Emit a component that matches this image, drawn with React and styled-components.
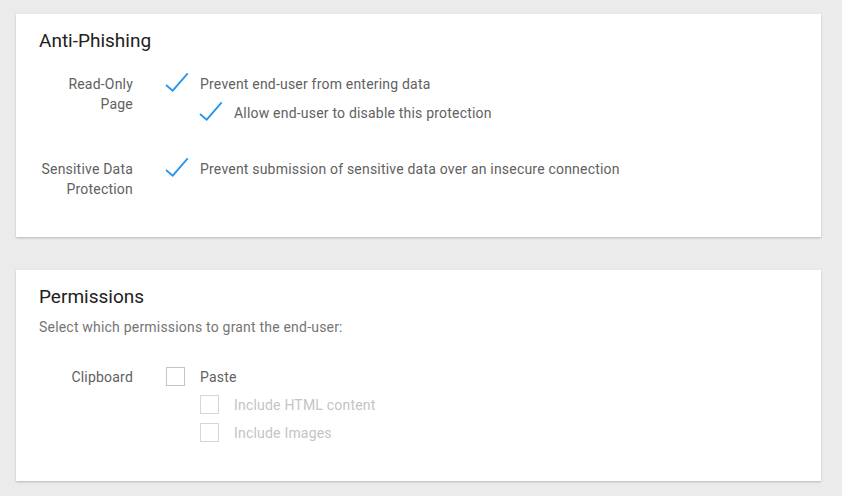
import React from 'react'
import styled, { createGlobalStyle } from 'styled-components'

const GlobalStyle = createGlobalStyle`
  html, body {
    margin: 0;
    padding: 0;
    background: #ebebeb;
    font-family: Roboto, "Liberation Sans", Arial, sans-serif;
  }
`

function Check() {
  return (
    <CheckIcon width="24" height="20" viewBox="0 0 24 20">
      <polyline points="2,11 8.7,16.7 23.7,-0.7" fill="none" stroke="#2196f3" strokeWidth="1.8" />
    </CheckIcon>
  )
}

function Option({ checked, disabled, children }) {
  return (
    <OptionRow>
      <Control>{checked ? <Check /> : <Box disabled={disabled} />}</Control>
      <OptionText disabled={disabled}>{children}</OptionText>
    </OptionRow>
  )
}

function App() {
  return (
    <Page>
      <GlobalStyle />
      <Card>
        <Title>Anti-Phishing</Title>
        <Rows>
          <Row>
            <Label>Read-Only<br />Page</Label>
            <Options>
              <Option checked>Prevent end-user from entering data</Option>
              <Sub>
                <Option checked>Allow end-user to disable this protection</Option>
              </Sub>
            </Options>
          </Row>
          <Row>
            <Label>Sensitive Data<br />Protection</Label>
            <Options>
              <Option checked>Prevent submission of sensitive data over an insecure connection</Option>
            </Options>
          </Row>
        </Rows>
      </Card>

      <Card>
        <Title>Permissions</Title>
        <Subtitle>Select which permissions to grant the end-user:</Subtitle>
        <Rows spaced>
          <Row>
            <Label>Clipboard</Label>
            <Options gap={8}>
              <Option>Paste</Option>
              <Sub gap={8}>
                <Option disabled>Include HTML content</Option>
                <Option disabled>Include Images</Option>
              </Sub>
            </Options>
          </Row>
        </Rows>
      </Card>
    </Page>
  )
}

export default App

const Page = styled.div`
  display: flex;
  flex-direction: column;
  gap: 33px;
  padding: 14px 21px 15px 16px;
`

const Card = styled.div`
  background: #fff;
  padding: 15px 23px 38px;
  box-shadow: 0 1px 2px rgba(0, 0, 0, 0.22);
`

const Title = styled.div`
  font-size: 19px;
  line-height: 24px;
  color: #212121;
`

const Subtitle = styled.div`
  margin-top: 8px;
  font-size: 14px;
  line-height: 20px;
  letter-spacing: 0.2px;
  color: #757575;
`

const Rows = styled.div`
  display: flex;
  flex-direction: column;
  gap: 36px;
  margin-top: ${props => props.spaced ? '30px' : '21px'};
`

const Row = styled.div`
  display: flex;
  align-items: flex-start;
`

const Label = styled.div`
  width: 94px;
  flex-shrink: 0;
  margin-right: 31px;
  text-align: right;
  font-size: 14px;
  line-height: 20px;
  letter-spacing: 0.2px;
  color: #616161;
`

const Options = styled.div`
  display: flex;
  flex-direction: column;
  gap: ${props => props.gap ?? 9}px;
`

const Sub = styled.div`
  display: flex;
  flex-direction: column;
  gap: ${props => props.gap ?? 9}px;
  padding-left: 34px;
`

const OptionRow = styled.div`
  display: flex;
  align-items: center;
  height: 20px;
`

const Control = styled.div`
  width: 24px;
  height: 20px;
  margin-right: 12px;
  display: flex;
  align-items: center;
`

const CheckIcon = styled.svg`
  overflow: visible;
  display: block;
`

const Box = styled.div`
  width: 17px;
  height: 17px;
  margin-left: 2px;
  margin-top: -1px;
  border: 1px solid ${props => props.disabled ? '#d6d6d6' : '#c4c4c4'};
  background: #fff;
`

const OptionText = styled.div`
  font-size: 14px;
  line-height: 20px;
  letter-spacing: 0.2px;
  color: ${props => props.disabled ? '#c4c4c4' : '#616161'};
  white-space: nowrap;
`
